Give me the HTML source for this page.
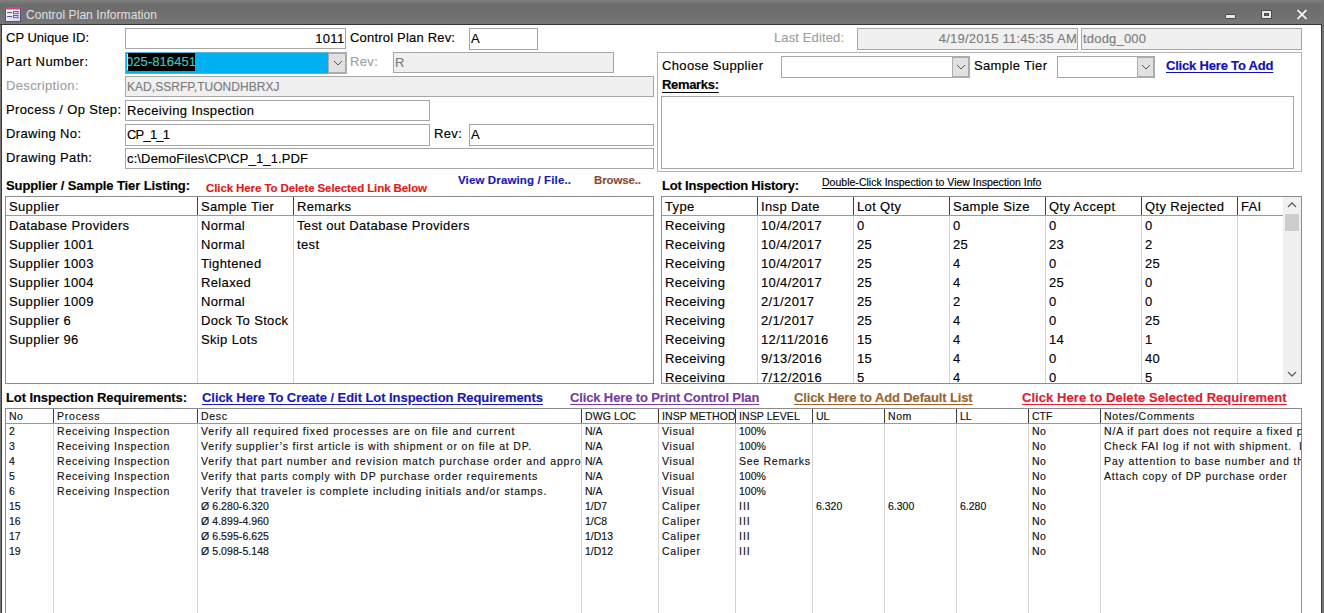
<!DOCTYPE html>
<html><head><meta charset="utf-8"><style>
html,body{margin:0;padding:0;width:1324px;height:613px;overflow:hidden;background:#fff;font-family:"Liberation Sans",sans-serif;}
body div{-webkit-text-stroke:0.15px currentColor;}
</style></head><body>
<div style="position:absolute;left:0px;top:0px;width:1324px;height:25px;background:linear-gradient(#808080 0px,#6c6c6c 5px,#6e6e6e 12px,#767676 22px)"></div><div style="position:absolute;left:0px;top:24px;width:1324px;height:1px;background:#363636"></div><div style="position:absolute;left:0px;top:25px;width:1px;height:588px;background:#747474"></div><div style="position:absolute;left:1px;top:24px;width:1px;height:589px;background:#3a3a3a"></div><div style="position:absolute;left:1321px;top:24px;width:1px;height:589px;background:#3a3a3a"></div><div style="position:absolute;left:1322px;top:0px;width:2px;height:613px;background:#727272"></div><svg style="position:absolute;left:5px;top:7px" width="16" height="15" viewBox="0 0 16 15">
<defs><linearGradient id="ig" x1="0" y1="0" x2="1" y2="1"><stop offset="0" stop-color="#ffffff"/><stop offset="1" stop-color="#d8d0f0"/></linearGradient></defs>
<rect x="0.5" y="0.5" width="15" height="14" fill="url(#ig)" stroke="#50507a"/>
<rect x="0" y="0" width="16" height="2.5" fill="#c84878"/>
<rect x="2" y="5" width="5" height="1.1" fill="#5a5a80"/>
<rect x="2" y="9" width="5" height="1.1" fill="#5a5a80"/>
<rect x="8.5" y="4.5" width="4.5" height="2.2" fill="none" stroke="#5a5a80" stroke-width="0.9"/>
<rect x="8.5" y="8.5" width="4.5" height="2.2" fill="none" stroke="#5a5a80" stroke-width="0.9"/>
</svg><div style="position:absolute;left:1225px;top:14px;width:11px;height:5px;background:#e8e8e8;border:1px solid #4a4a4a;box-sizing:border-box;border-radius:1px"></div><div style="position:absolute;left:1261px;top:10px;width:11px;height:9px;border:1px solid #4a4a4a;box-sizing:border-box"><div style="position:absolute;left:0;top:0;right:0;bottom:0;border:2px solid #e8e8e8;border-top-width:2px"><div style="position:absolute;left:0;top:0;right:0;bottom:0;border:1px solid #4a4a4a;border-width:0.5px"></div></div></div><svg style="position:absolute;left:1296px;top:9px" width="12" height="11" viewBox="0 0 12 11">
<path d="M1.5 1 L10.5 10 M10.5 1 L1.5 10" stroke="#4a4a4a" stroke-width="3.4"/>
<path d="M1.5 1 L10.5 10 M10.5 1 L1.5 10" stroke="#ececec" stroke-width="2.2"/></svg><div style="position:absolute;left:2px;top:25px;width:1319px;height:588px;background:#fff"></div><div style="position:absolute;left:125px;top:28px;width:221px;height:21px;background:#fff;border:1px solid #a6a6a6;box-sizing:border-box"></div><div style="position:absolute;left:469px;top:28px;width:69px;height:22px;background:#fff;border:1px solid #a6a6a6;box-sizing:border-box"></div><div style="position:absolute;left:125px;top:52px;width:221px;height:22px;background:#00b0f0;border:1px solid #5ab4d8;box-sizing:border-box"></div><div style="position:absolute;left:128px;top:53px;width:67px;height:18px;background:#000"></div><div style="position:absolute;left:127px;top:54px;width:1px;height:16px;background:#fff"></div><div style="position:absolute;left:328px;top:52px;width:19px;height:22px;background:#e1e1e1;border:2px solid #acacac;border-left-width:1px;box-sizing:border-box"></div><svg style="position:absolute;left:332.5px;top:59.7px" width="10" height="6" viewBox="0 0 10 6"><path d="M1 1 L5 5 L9 1" fill="none" stroke="#555" stroke-width="1"/></svg><div style="position:absolute;left:393px;top:52px;width:221px;height:21px;background:#f0f0f0;border:1px solid #a6a6a6;box-sizing:border-box"></div><div style="position:absolute;left:125px;top:76px;width:529px;height:21px;background:#f0f0f0;border:1px solid #a6a6a6;box-sizing:border-box"></div><div style="position:absolute;left:125px;top:100px;width:305px;height:21px;background:#fff;border:1px solid #a6a6a6;box-sizing:border-box"></div><div style="position:absolute;left:125px;top:124px;width:305px;height:22px;background:#fff;border:1px solid #a6a6a6;box-sizing:border-box"></div><div style="position:absolute;left:469px;top:124px;width:185px;height:22px;background:#fff;border:1px solid #a6a6a6;box-sizing:border-box"></div><div style="position:absolute;left:125px;top:148px;width:529px;height:21px;background:#fff;border:1px solid #a6a6a6;box-sizing:border-box"></div><div style="position:absolute;left:857px;top:28px;width:221px;height:22px;background:#f0f0f0;border:1px solid #a6a6a6;box-sizing:border-box"></div><div style="position:absolute;left:1081px;top:28px;width:221px;height:22px;background:#f0f0f0;border:1px solid #a6a6a6;box-sizing:border-box"></div><div style="position:absolute;left:657px;top:52px;width:645px;height:120px;background:#fff;border:1px solid #b4b4b4;box-sizing:border-box"></div><div style="position:absolute;left:781px;top:56px;width:188px;height:22px;background:#fff;border:1px solid #a6a6a6;box-sizing:border-box"></div><div style="position:absolute;left:952px;top:56px;width:18px;height:22px;background:#e1e1e1;border:2px solid #acacac;border-left-width:1px;box-sizing:border-box"></div><svg style="position:absolute;left:956.0px;top:63.7px" width="10" height="6" viewBox="0 0 10 6"><path d="M1 1 L5 5 L9 1" fill="none" stroke="#555" stroke-width="1"/></svg><div style="position:absolute;left:1057px;top:56px;width:97px;height:22px;background:#fff;border:1px solid #a6a6a6;box-sizing:border-box"></div><div style="position:absolute;left:1137px;top:56px;width:18px;height:22px;background:#e1e1e1;border:2px solid #acacac;border-left-width:1px;box-sizing:border-box"></div><svg style="position:absolute;left:1141.0px;top:63.7px" width="10" height="6" viewBox="0 0 10 6"><path d="M1 1 L5 5 L9 1" fill="none" stroke="#555" stroke-width="1"/></svg><div style="position:absolute;left:661px;top:96px;width:633px;height:73px;background:#fff;border:1px solid #a6a6a6;box-sizing:border-box"></div><div style="position:absolute;left:5px;top:196px;width:649px;height:188px;background:#fff;border:1px solid #8c8c8c;box-sizing:border-box"></div><div style="position:absolute;left:6px;top:215px;width:647px;height:1px;background:#999999"></div><div style="position:absolute;left:197px;top:197px;width:1px;height:18px;background:#404040"></div><div style="position:absolute;left:197px;top:216px;width:1px;height:167px;background:#d4d4d4"></div><div style="position:absolute;left:293px;top:197px;width:1px;height:18px;background:#404040"></div><div style="position:absolute;left:293px;top:216px;width:1px;height:167px;background:#d4d4d4"></div><div style="position:absolute;left:661px;top:196px;width:641px;height:188px;background:#fff;border:1px solid #8c8c8c;box-sizing:border-box"></div><div style="position:absolute;left:662px;top:215px;width:622px;height:1px;background:#999999"></div><div style="position:absolute;left:757px;top:197px;width:1px;height:18px;background:#404040"></div><div style="position:absolute;left:757px;top:216px;width:1px;height:167px;background:#d4d4d4"></div><div style="position:absolute;left:853px;top:197px;width:1px;height:18px;background:#404040"></div><div style="position:absolute;left:853px;top:216px;width:1px;height:167px;background:#d4d4d4"></div><div style="position:absolute;left:949px;top:197px;width:1px;height:18px;background:#404040"></div><div style="position:absolute;left:949px;top:216px;width:1px;height:167px;background:#d4d4d4"></div><div style="position:absolute;left:1045px;top:197px;width:1px;height:18px;background:#404040"></div><div style="position:absolute;left:1045px;top:216px;width:1px;height:167px;background:#d4d4d4"></div><div style="position:absolute;left:1141px;top:197px;width:1px;height:18px;background:#404040"></div><div style="position:absolute;left:1141px;top:216px;width:1px;height:167px;background:#d4d4d4"></div><div style="position:absolute;left:1237px;top:197px;width:1px;height:18px;background:#404040"></div><div style="position:absolute;left:1237px;top:216px;width:1px;height:167px;background:#d4d4d4"></div><div style="position:absolute;left:1283px;top:197px;width:18px;height:186px;background:#f0f0f0"></div><div style="position:absolute;left:1285px;top:214px;width:14px;height:17px;background:#cdcdcd"></div><svg style="position:absolute;left:1287px;top:202px" width="10" height="6" viewBox="0 0 10 6"><path d="M1 5 L5 1 L9 5" fill="none" stroke="#606060" stroke-width="1.3"/></svg><svg style="position:absolute;left:1287px;top:371px" width="10" height="6" viewBox="0 0 10 6"><path d="M1 1 L5 5 L9 1" fill="none" stroke="#606060" stroke-width="1.3"/></svg><div style="position:absolute;left:5px;top:408px;width:1297px;height:205px;border:1px solid #8c8c8c;border-bottom:none;box-sizing:border-box;background:#fff"></div><div style="position:absolute;left:6px;top:423px;width:1295px;height:1px;background:#999999"></div><div style="position:absolute;left:53px;top:409px;width:1px;height:14px;background:#404040"></div><div style="position:absolute;left:53px;top:424px;width:1px;height:189px;background:#d4d4d4"></div><div style="position:absolute;left:197px;top:409px;width:1px;height:14px;background:#404040"></div><div style="position:absolute;left:197px;top:424px;width:1px;height:189px;background:#d4d4d4"></div><div style="position:absolute;left:581px;top:409px;width:1px;height:14px;background:#404040"></div><div style="position:absolute;left:581px;top:424px;width:1px;height:189px;background:#d4d4d4"></div><div style="position:absolute;left:658px;top:409px;width:1px;height:14px;background:#404040"></div><div style="position:absolute;left:658px;top:424px;width:1px;height:189px;background:#d4d4d4"></div><div style="position:absolute;left:735px;top:409px;width:1px;height:14px;background:#404040"></div><div style="position:absolute;left:735px;top:424px;width:1px;height:189px;background:#d4d4d4"></div><div style="position:absolute;left:812px;top:409px;width:1px;height:14px;background:#404040"></div><div style="position:absolute;left:812px;top:424px;width:1px;height:189px;background:#d4d4d4"></div><div style="position:absolute;left:884px;top:409px;width:1px;height:14px;background:#404040"></div><div style="position:absolute;left:884px;top:424px;width:1px;height:189px;background:#d4d4d4"></div><div style="position:absolute;left:956px;top:409px;width:1px;height:14px;background:#404040"></div><div style="position:absolute;left:956px;top:424px;width:1px;height:189px;background:#d4d4d4"></div><div style="position:absolute;left:1028px;top:409px;width:1px;height:14px;background:#404040"></div><div style="position:absolute;left:1028px;top:424px;width:1px;height:189px;background:#d4d4d4"></div><div style="position:absolute;left:1100px;top:409px;width:1px;height:14px;background:#404040"></div><div style="position:absolute;left:1100px;top:424px;width:1px;height:189px;background:#d4d4d4"></div>
<div style="position:absolute;top:8px;font-size:12px;font-weight:400;color:#e0e0e0;white-space:pre;line-height:normal;letter-spacing:0.069px;left:26px;-webkit-text-stroke:0;">Control Plan Information</div><div style="position:absolute;top:30px;font-size:13px;font-weight:400;color:#000;white-space:pre;line-height:normal;letter-spacing:0.012px;left:6px;">CP Unique ID:</div><div style="position:absolute;top:30.5px;font-size:13px;font-weight:400;color:#000;white-space:pre;line-height:normal;letter-spacing:0.350px;right:979.5px;">1011</div><div style="position:absolute;top:30px;font-size:13px;font-weight:400;color:#000;white-space:pre;line-height:normal;letter-spacing:0.194px;left:350px;">Control Plan Rev:</div><div style="position:absolute;top:30.5px;font-size:13px;font-weight:400;color:#000;white-space:pre;line-height:normal;letter-spacing:0.350px;left:471px;">A</div><div style="position:absolute;top:54px;font-size:13px;font-weight:400;color:#000;white-space:pre;line-height:normal;letter-spacing:0.426px;left:6px;">Part Number:</div><div style="position:absolute;top:54px;font-size:13px;font-weight:400;color:#3cc8c0;white-space:pre;line-height:normal;letter-spacing:0.066px;left:126px;clip-path:inset(0 0 0 2px);">025-816451</div><div style="position:absolute;top:54px;font-size:13px;font-weight:400;color:#a0a0a0;white-space:pre;line-height:normal;letter-spacing:0.350px;left:350px;">Rev:</div><div style="position:absolute;top:55px;font-size:13px;font-weight:400;color:#7c7c7c;white-space:pre;line-height:normal;letter-spacing:0.350px;left:395px;">R</div><div style="position:absolute;top:78px;font-size:13px;font-weight:400;color:#a0a0a0;white-space:pre;line-height:normal;letter-spacing:0.350px;left:6px;">Description:</div><div style="position:absolute;top:80px;font-size:12px;font-weight:400;color:#7c7c7c;white-space:pre;line-height:normal;letter-spacing:0.036px;left:127px;">KAD,SSRFP,TUONDHBRXJ</div><div style="position:absolute;top:102px;font-size:13px;font-weight:400;color:#000;white-space:pre;line-height:normal;letter-spacing:0.350px;left:6px;">Process / Op Step:</div><div style="position:absolute;top:102.5px;font-size:13px;font-weight:400;color:#000;white-space:pre;line-height:normal;letter-spacing:0.370px;left:127px;">Receiving Inspection</div><div style="position:absolute;top:126px;font-size:13px;font-weight:400;color:#000;white-space:pre;line-height:normal;letter-spacing:0.350px;left:6px;">Drawing No:</div><div style="position:absolute;top:127px;font-size:13px;font-weight:400;color:#000;white-space:pre;line-height:normal;letter-spacing:-0.797px;left:127px;">CP_1_1</div><div style="position:absolute;top:126px;font-size:13px;font-weight:400;color:#000;white-space:pre;line-height:normal;letter-spacing:0.350px;left:434px;">Rev:</div><div style="position:absolute;top:127px;font-size:13px;font-weight:400;color:#000;white-space:pre;line-height:normal;letter-spacing:0.350px;left:471px;">A</div><div style="position:absolute;top:150px;font-size:13px;font-weight:400;color:#000;white-space:pre;line-height:normal;letter-spacing:0.350px;left:6px;">Drawing Path:</div><div style="position:absolute;top:150.5px;font-size:13px;font-weight:400;color:#000;white-space:pre;line-height:normal;letter-spacing:0.131px;left:127px;">c:\DemoFiles\CP\CP_1_1.PDF</div><div style="position:absolute;top:30px;font-size:13px;font-weight:400;color:#a0a0a0;white-space:pre;line-height:normal;letter-spacing:0.122px;left:774px;">Last Edited:</div><div style="position:absolute;top:31px;font-size:13px;font-weight:400;color:#7c7c7c;white-space:pre;line-height:normal;letter-spacing:0.226px;right:247px;">4/19/2015 11:45:35 AM</div><div style="position:absolute;top:31px;font-size:13px;font-weight:400;color:#7c7c7c;white-space:pre;line-height:normal;letter-spacing:0.193px;left:1083px;">tdodg_000</div><div style="position:absolute;top:58px;font-size:13px;font-weight:400;color:#000;white-space:pre;line-height:normal;letter-spacing:0.348px;left:662px;">Choose Supplier</div><div style="position:absolute;top:58px;font-size:13px;font-weight:400;color:#000;white-space:pre;line-height:normal;letter-spacing:0.362px;left:974px;">Sample Tier</div><div style="position:absolute;top:58px;font-size:13px;font-weight:700;color:#1010b8;white-space:pre;line-height:normal;letter-spacing:-0.189px;left:1166px;text-decoration:underline;text-underline-offset:2px;">Click Here To Add</div><div style="position:absolute;top:77px;font-size:13px;font-weight:700;color:#000;white-space:pre;line-height:normal;letter-spacing:-0.324px;left:662px;text-decoration:underline;text-underline-offset:3px;">Remarks:</div><div style="position:absolute;top:178px;font-size:13px;font-weight:700;color:#000;white-space:pre;line-height:normal;letter-spacing:-0.095px;left:6px;">Supplier / Sample Tier Listing:</div><div style="position:absolute;top:182px;font-size:11.5px;font-weight:700;color:#e01818;white-space:pre;line-height:normal;letter-spacing:-0.096px;left:206px;">Click Here To Delete Selected Link Below</div><div style="position:absolute;top:174px;font-size:11.5px;font-weight:700;color:#1a1ab4;white-space:pre;line-height:normal;letter-spacing:0.132px;left:458px;">View Drawing / File..</div><div style="position:absolute;top:174px;font-size:11.5px;font-weight:700;color:#8c4a3c;white-space:pre;line-height:normal;letter-spacing:-0.134px;left:594px;">Browse..</div><div style="position:absolute;top:178px;font-size:13px;font-weight:700;color:#000;white-space:pre;line-height:normal;letter-spacing:-0.207px;left:662px;">Lot Inspection History:</div><div style="position:absolute;top:176px;font-size:10.5px;font-weight:400;color:#000;white-space:pre;line-height:normal;letter-spacing:0.015px;left:822px;text-decoration:underline;text-underline-offset:2px;">Double-Click Inspection to View Inspection Info</div><div style="position:absolute;top:199px;font-size:13px;font-weight:400;color:#000;white-space:pre;line-height:normal;letter-spacing:0.350px;left:9px;">Supplier</div><div style="position:absolute;top:199px;font-size:13px;font-weight:400;color:#000;white-space:pre;line-height:normal;letter-spacing:0.350px;left:201px;">Sample Tier</div><div style="position:absolute;top:199px;font-size:13px;font-weight:400;color:#000;white-space:pre;line-height:normal;letter-spacing:0.350px;left:297px;">Remarks</div><div style="position:absolute;top:218px;font-size:13px;font-weight:400;color:#000;white-space:pre;line-height:normal;letter-spacing:0.350px;left:9px;">Database Providers</div><div style="position:absolute;top:218px;font-size:13px;font-weight:400;color:#000;white-space:pre;line-height:normal;letter-spacing:0.350px;left:201px;">Normal</div><div style="position:absolute;top:218px;font-size:13px;font-weight:400;color:#000;white-space:pre;line-height:normal;letter-spacing:0.350px;left:297px;">Test out Database Providers</div><div style="position:absolute;top:237px;font-size:13px;font-weight:400;color:#000;white-space:pre;line-height:normal;letter-spacing:0.350px;left:9px;">Supplier 1001</div><div style="position:absolute;top:237px;font-size:13px;font-weight:400;color:#000;white-space:pre;line-height:normal;letter-spacing:0.350px;left:201px;">Normal</div><div style="position:absolute;top:237px;font-size:13px;font-weight:400;color:#000;white-space:pre;line-height:normal;letter-spacing:0.350px;left:297px;">test</div><div style="position:absolute;top:256px;font-size:13px;font-weight:400;color:#000;white-space:pre;line-height:normal;letter-spacing:0.350px;left:9px;">Supplier 1003</div><div style="position:absolute;top:256px;font-size:13px;font-weight:400;color:#000;white-space:pre;line-height:normal;letter-spacing:0.350px;left:201px;">Tightened</div><div style="position:absolute;top:275px;font-size:13px;font-weight:400;color:#000;white-space:pre;line-height:normal;letter-spacing:0.350px;left:9px;">Supplier 1004</div><div style="position:absolute;top:275px;font-size:13px;font-weight:400;color:#000;white-space:pre;line-height:normal;letter-spacing:0.350px;left:201px;">Relaxed</div><div style="position:absolute;top:294px;font-size:13px;font-weight:400;color:#000;white-space:pre;line-height:normal;letter-spacing:0.350px;left:9px;">Supplier 1009</div><div style="position:absolute;top:294px;font-size:13px;font-weight:400;color:#000;white-space:pre;line-height:normal;letter-spacing:0.350px;left:201px;">Normal</div><div style="position:absolute;top:313px;font-size:13px;font-weight:400;color:#000;white-space:pre;line-height:normal;letter-spacing:0.350px;left:9px;">Supplier 6</div><div style="position:absolute;top:313px;font-size:13px;font-weight:400;color:#000;white-space:pre;line-height:normal;letter-spacing:0.350px;left:201px;">Dock To Stock</div><div style="position:absolute;top:332px;font-size:13px;font-weight:400;color:#000;white-space:pre;line-height:normal;letter-spacing:0.350px;left:9px;">Supplier 96</div><div style="position:absolute;top:332px;font-size:13px;font-weight:400;color:#000;white-space:pre;line-height:normal;letter-spacing:0.350px;left:201px;">Skip Lots</div><div style="position:absolute;top:199px;font-size:13px;font-weight:400;color:#000;white-space:pre;line-height:normal;letter-spacing:0.350px;left:665px;">Type</div><div style="position:absolute;top:199px;font-size:13px;font-weight:400;color:#000;white-space:pre;line-height:normal;letter-spacing:0.350px;left:761px;">Insp Date</div><div style="position:absolute;top:199px;font-size:13px;font-weight:400;color:#000;white-space:pre;line-height:normal;letter-spacing:0.350px;left:857px;">Lot Qty</div><div style="position:absolute;top:199px;font-size:13px;font-weight:400;color:#000;white-space:pre;line-height:normal;letter-spacing:0.350px;left:953px;">Sample Size</div><div style="position:absolute;top:199px;font-size:13px;font-weight:400;color:#000;white-space:pre;line-height:normal;letter-spacing:0.350px;left:1049px;">Qty Accept</div><div style="position:absolute;top:199px;font-size:13px;font-weight:400;color:#000;white-space:pre;line-height:normal;letter-spacing:0.350px;left:1145px;">Qty Rejected</div><div style="position:absolute;top:199px;font-size:13px;font-weight:400;color:#000;white-space:pre;line-height:normal;letter-spacing:0.350px;left:1241px;">FAI</div><div style="position:absolute;top:218px;font-size:13px;font-weight:400;color:#000;white-space:pre;line-height:normal;letter-spacing:0.350px;left:665px;">Receiving</div><div style="position:absolute;top:218px;font-size:13px;font-weight:400;color:#000;white-space:pre;line-height:normal;letter-spacing:0.350px;left:761px;">10/4/2017</div><div style="position:absolute;top:218px;font-size:13px;font-weight:400;color:#000;white-space:pre;line-height:normal;letter-spacing:0.350px;left:857px;">0</div><div style="position:absolute;top:218px;font-size:13px;font-weight:400;color:#000;white-space:pre;line-height:normal;letter-spacing:0.350px;left:953px;">0</div><div style="position:absolute;top:218px;font-size:13px;font-weight:400;color:#000;white-space:pre;line-height:normal;letter-spacing:0.350px;left:1049px;">0</div><div style="position:absolute;top:218px;font-size:13px;font-weight:400;color:#000;white-space:pre;line-height:normal;letter-spacing:0.350px;left:1145px;">0</div><div style="position:absolute;top:237px;font-size:13px;font-weight:400;color:#000;white-space:pre;line-height:normal;letter-spacing:0.350px;left:665px;">Receiving</div><div style="position:absolute;top:237px;font-size:13px;font-weight:400;color:#000;white-space:pre;line-height:normal;letter-spacing:0.350px;left:761px;">10/4/2017</div><div style="position:absolute;top:237px;font-size:13px;font-weight:400;color:#000;white-space:pre;line-height:normal;letter-spacing:0.350px;left:857px;">25</div><div style="position:absolute;top:237px;font-size:13px;font-weight:400;color:#000;white-space:pre;line-height:normal;letter-spacing:0.350px;left:953px;">25</div><div style="position:absolute;top:237px;font-size:13px;font-weight:400;color:#000;white-space:pre;line-height:normal;letter-spacing:0.350px;left:1049px;">23</div><div style="position:absolute;top:237px;font-size:13px;font-weight:400;color:#000;white-space:pre;line-height:normal;letter-spacing:0.350px;left:1145px;">2</div><div style="position:absolute;top:256px;font-size:13px;font-weight:400;color:#000;white-space:pre;line-height:normal;letter-spacing:0.350px;left:665px;">Receiving</div><div style="position:absolute;top:256px;font-size:13px;font-weight:400;color:#000;white-space:pre;line-height:normal;letter-spacing:0.350px;left:761px;">10/4/2017</div><div style="position:absolute;top:256px;font-size:13px;font-weight:400;color:#000;white-space:pre;line-height:normal;letter-spacing:0.350px;left:857px;">25</div><div style="position:absolute;top:256px;font-size:13px;font-weight:400;color:#000;white-space:pre;line-height:normal;letter-spacing:0.350px;left:953px;">4</div><div style="position:absolute;top:256px;font-size:13px;font-weight:400;color:#000;white-space:pre;line-height:normal;letter-spacing:0.350px;left:1049px;">0</div><div style="position:absolute;top:256px;font-size:13px;font-weight:400;color:#000;white-space:pre;line-height:normal;letter-spacing:0.350px;left:1145px;">25</div><div style="position:absolute;top:275px;font-size:13px;font-weight:400;color:#000;white-space:pre;line-height:normal;letter-spacing:0.350px;left:665px;">Receiving</div><div style="position:absolute;top:275px;font-size:13px;font-weight:400;color:#000;white-space:pre;line-height:normal;letter-spacing:0.350px;left:761px;">10/4/2017</div><div style="position:absolute;top:275px;font-size:13px;font-weight:400;color:#000;white-space:pre;line-height:normal;letter-spacing:0.350px;left:857px;">25</div><div style="position:absolute;top:275px;font-size:13px;font-weight:400;color:#000;white-space:pre;line-height:normal;letter-spacing:0.350px;left:953px;">4</div><div style="position:absolute;top:275px;font-size:13px;font-weight:400;color:#000;white-space:pre;line-height:normal;letter-spacing:0.350px;left:1049px;">25</div><div style="position:absolute;top:275px;font-size:13px;font-weight:400;color:#000;white-space:pre;line-height:normal;letter-spacing:0.350px;left:1145px;">0</div><div style="position:absolute;top:294px;font-size:13px;font-weight:400;color:#000;white-space:pre;line-height:normal;letter-spacing:0.350px;left:665px;">Receiving</div><div style="position:absolute;top:294px;font-size:13px;font-weight:400;color:#000;white-space:pre;line-height:normal;letter-spacing:0.350px;left:761px;">2/1/2017</div><div style="position:absolute;top:294px;font-size:13px;font-weight:400;color:#000;white-space:pre;line-height:normal;letter-spacing:0.350px;left:857px;">25</div><div style="position:absolute;top:294px;font-size:13px;font-weight:400;color:#000;white-space:pre;line-height:normal;letter-spacing:0.350px;left:953px;">2</div><div style="position:absolute;top:294px;font-size:13px;font-weight:400;color:#000;white-space:pre;line-height:normal;letter-spacing:0.350px;left:1049px;">0</div><div style="position:absolute;top:294px;font-size:13px;font-weight:400;color:#000;white-space:pre;line-height:normal;letter-spacing:0.350px;left:1145px;">0</div><div style="position:absolute;top:313px;font-size:13px;font-weight:400;color:#000;white-space:pre;line-height:normal;letter-spacing:0.350px;left:665px;">Receiving</div><div style="position:absolute;top:313px;font-size:13px;font-weight:400;color:#000;white-space:pre;line-height:normal;letter-spacing:0.350px;left:761px;">2/1/2017</div><div style="position:absolute;top:313px;font-size:13px;font-weight:400;color:#000;white-space:pre;line-height:normal;letter-spacing:0.350px;left:857px;">25</div><div style="position:absolute;top:313px;font-size:13px;font-weight:400;color:#000;white-space:pre;line-height:normal;letter-spacing:0.350px;left:953px;">4</div><div style="position:absolute;top:313px;font-size:13px;font-weight:400;color:#000;white-space:pre;line-height:normal;letter-spacing:0.350px;left:1049px;">0</div><div style="position:absolute;top:313px;font-size:13px;font-weight:400;color:#000;white-space:pre;line-height:normal;letter-spacing:0.350px;left:1145px;">25</div><div style="position:absolute;top:332px;font-size:13px;font-weight:400;color:#000;white-space:pre;line-height:normal;letter-spacing:0.350px;left:665px;">Receiving</div><div style="position:absolute;top:332px;font-size:13px;font-weight:400;color:#000;white-space:pre;line-height:normal;letter-spacing:0.350px;left:761px;">12/11/2016</div><div style="position:absolute;top:332px;font-size:13px;font-weight:400;color:#000;white-space:pre;line-height:normal;letter-spacing:0.350px;left:857px;">15</div><div style="position:absolute;top:332px;font-size:13px;font-weight:400;color:#000;white-space:pre;line-height:normal;letter-spacing:0.350px;left:953px;">4</div><div style="position:absolute;top:332px;font-size:13px;font-weight:400;color:#000;white-space:pre;line-height:normal;letter-spacing:0.350px;left:1049px;">14</div><div style="position:absolute;top:332px;font-size:13px;font-weight:400;color:#000;white-space:pre;line-height:normal;letter-spacing:0.350px;left:1145px;">1</div><div style="position:absolute;top:351px;font-size:13px;font-weight:400;color:#000;white-space:pre;line-height:normal;letter-spacing:0.350px;left:665px;">Receiving</div><div style="position:absolute;top:351px;font-size:13px;font-weight:400;color:#000;white-space:pre;line-height:normal;letter-spacing:0.350px;left:761px;">9/13/2016</div><div style="position:absolute;top:351px;font-size:13px;font-weight:400;color:#000;white-space:pre;line-height:normal;letter-spacing:0.350px;left:857px;">15</div><div style="position:absolute;top:351px;font-size:13px;font-weight:400;color:#000;white-space:pre;line-height:normal;letter-spacing:0.350px;left:953px;">4</div><div style="position:absolute;top:351px;font-size:13px;font-weight:400;color:#000;white-space:pre;line-height:normal;letter-spacing:0.350px;left:1049px;">0</div><div style="position:absolute;top:351px;font-size:13px;font-weight:400;color:#000;white-space:pre;line-height:normal;letter-spacing:0.350px;left:1145px;">40</div><div style="position:absolute;top:370px;font-size:13px;font-weight:400;color:#000;white-space:pre;line-height:normal;letter-spacing:0.350px;left:665px;clip-path:inset(0 0 3px 0);">Receiving</div><div style="position:absolute;top:370px;font-size:13px;font-weight:400;color:#000;white-space:pre;line-height:normal;letter-spacing:0.350px;left:761px;clip-path:inset(0 0 3px 0);">7/12/2016</div><div style="position:absolute;top:370px;font-size:13px;font-weight:400;color:#000;white-space:pre;line-height:normal;letter-spacing:0.350px;left:857px;clip-path:inset(0 0 3px 0);">5</div><div style="position:absolute;top:370px;font-size:13px;font-weight:400;color:#000;white-space:pre;line-height:normal;letter-spacing:0.350px;left:953px;clip-path:inset(0 0 3px 0);">4</div><div style="position:absolute;top:370px;font-size:13px;font-weight:400;color:#000;white-space:pre;line-height:normal;letter-spacing:0.350px;left:1049px;clip-path:inset(0 0 3px 0);">0</div><div style="position:absolute;top:370px;font-size:13px;font-weight:400;color:#000;white-space:pre;line-height:normal;letter-spacing:0.350px;left:1145px;clip-path:inset(0 0 3px 0);">5</div><div style="position:absolute;top:390px;font-size:13px;font-weight:700;color:#000;white-space:pre;line-height:normal;letter-spacing:-0.091px;left:6px;">Lot Inspection Requirements:</div><div style="position:absolute;top:390px;font-size:13px;font-weight:700;color:#1a1ab4;white-space:pre;line-height:normal;letter-spacing:-0.062px;left:202px;text-decoration:underline;text-underline-offset:2px;">Click Here To Create / Edit Lot Inspection Requirements</div><div style="position:absolute;top:390px;font-size:13px;font-weight:700;color:#7a3c9c;white-space:pre;line-height:normal;letter-spacing:-0.135px;left:570px;text-decoration:underline;text-underline-offset:2px;">Click Here to Print Control Plan</div><div style="position:absolute;top:390px;font-size:13px;font-weight:700;color:#9a6630;white-space:pre;line-height:normal;letter-spacing:-0.123px;left:794px;text-decoration:underline;text-underline-offset:2px;">Click Here to Add Default List</div><div style="position:absolute;top:390px;font-size:13px;font-weight:700;color:#e02030;white-space:pre;line-height:normal;letter-spacing:0.061px;left:1022px;text-decoration:underline;text-underline-offset:2px;">Click Here to Delete Selected Requirement</div><div style="position:absolute;top:410px;font-size:10.5px;font-weight:400;color:#111;white-space:pre;line-height:normal;letter-spacing:0.450px;width:44px;overflow:hidden;left:9px;">No</div><div style="position:absolute;top:410px;font-size:10.5px;font-weight:400;color:#111;white-space:pre;line-height:normal;letter-spacing:0.771px;width:140px;overflow:hidden;left:57px;">Process</div><div style="position:absolute;top:410px;font-size:10.5px;font-weight:400;color:#111;white-space:pre;line-height:normal;letter-spacing:0.675px;width:380px;overflow:hidden;left:201px;">Desc</div><div style="position:absolute;top:410px;font-size:10.5px;font-weight:400;color:#111;white-space:pre;line-height:normal;letter-spacing:0.129px;width:73px;overflow:hidden;left:585px;">DWG LOC</div><div style="position:absolute;top:410px;font-size:10.5px;font-weight:400;color:#111;white-space:pre;line-height:normal;letter-spacing:0.082px;width:73px;overflow:hidden;left:662px;">INSP METHOD</div><div style="position:absolute;top:410px;font-size:10.5px;font-weight:400;color:#111;white-space:pre;line-height:normal;letter-spacing:0.090px;width:73px;overflow:hidden;left:739px;">INSP LEVEL</div><div style="position:absolute;top:410px;font-size:10.5px;font-weight:400;color:#111;white-space:pre;line-height:normal;width:68px;overflow:hidden;left:816px;">UL</div><div style="position:absolute;top:410px;font-size:10.5px;font-weight:400;color:#111;white-space:pre;line-height:normal;letter-spacing:0.600px;width:68px;overflow:hidden;left:888px;">Nom</div><div style="position:absolute;top:410px;font-size:10.5px;font-weight:400;color:#111;white-space:pre;line-height:normal;width:68px;overflow:hidden;left:960px;">LL</div><div style="position:absolute;top:410px;font-size:10.5px;font-weight:400;color:#111;white-space:pre;line-height:normal;width:68px;overflow:hidden;left:1032px;">CTF</div><div style="position:absolute;top:410px;font-size:10.5px;font-weight:400;color:#111;white-space:pre;line-height:normal;letter-spacing:0.707px;width:197px;overflow:hidden;left:1104px;">Notes/Comments</div><div style="position:absolute;top:425px;font-size:10.5px;font-weight:400;color:#111;white-space:pre;line-height:normal;width:44px;overflow:hidden;left:9px;">2</div><div style="position:absolute;top:425px;font-size:10.5px;font-weight:400;color:#111;white-space:pre;line-height:normal;letter-spacing:0.810px;width:140px;overflow:hidden;left:57px;">Receiving Inspection</div><div style="position:absolute;top:425px;font-size:10.5px;font-weight:400;color:#111;white-space:pre;line-height:normal;letter-spacing:0.885px;width:380px;overflow:hidden;left:201px;">Verify all required fixed processes are on file and current</div><div style="position:absolute;top:425px;font-size:10.5px;font-weight:400;color:#111;white-space:pre;line-height:normal;width:73px;overflow:hidden;left:585px;">N/A</div><div style="position:absolute;top:425px;font-size:10.5px;font-weight:400;color:#111;white-space:pre;line-height:normal;letter-spacing:0.750px;width:73px;overflow:hidden;left:662px;">Visual</div><div style="position:absolute;top:425px;font-size:10.5px;font-weight:400;color:#111;white-space:pre;line-height:normal;width:73px;overflow:hidden;left:739px;">100%</div><div style="position:absolute;top:425px;font-size:10.5px;font-weight:400;color:#111;white-space:pre;line-height:normal;letter-spacing:0.450px;width:68px;overflow:hidden;left:1032px;">No</div><div style="position:absolute;top:425px;font-size:10.5px;font-weight:400;color:#111;white-space:pre;line-height:normal;letter-spacing:0.839px;width:197px;overflow:hidden;left:1104px;">N/A if part does not require a fixed process</div><div style="position:absolute;top:440px;font-size:10.5px;font-weight:400;color:#111;white-space:pre;line-height:normal;width:44px;overflow:hidden;left:9px;">3</div><div style="position:absolute;top:440px;font-size:10.5px;font-weight:400;color:#111;white-space:pre;line-height:normal;letter-spacing:0.810px;width:140px;overflow:hidden;left:57px;">Receiving Inspection</div><div style="position:absolute;top:440px;font-size:10.5px;font-weight:400;color:#111;white-space:pre;line-height:normal;letter-spacing:0.832px;width:380px;overflow:hidden;left:201px;">Verify supplier’s first article is with shipment or on file at DP.</div><div style="position:absolute;top:440px;font-size:10.5px;font-weight:400;color:#111;white-space:pre;line-height:normal;width:73px;overflow:hidden;left:585px;">N/A</div><div style="position:absolute;top:440px;font-size:10.5px;font-weight:400;color:#111;white-space:pre;line-height:normal;letter-spacing:0.750px;width:73px;overflow:hidden;left:662px;">Visual</div><div style="position:absolute;top:440px;font-size:10.5px;font-weight:400;color:#111;white-space:pre;line-height:normal;width:73px;overflow:hidden;left:739px;">100%</div><div style="position:absolute;top:440px;font-size:10.5px;font-weight:400;color:#111;white-space:pre;line-height:normal;letter-spacing:0.450px;width:68px;overflow:hidden;left:1032px;">No</div><div style="position:absolute;top:440px;font-size:10.5px;font-weight:400;color:#111;white-space:pre;line-height:normal;letter-spacing:0.762px;width:197px;overflow:hidden;left:1104px;">Check FAI log if not with shipment.  If</div><div style="position:absolute;top:455px;font-size:10.5px;font-weight:400;color:#111;white-space:pre;line-height:normal;width:44px;overflow:hidden;left:9px;">4</div><div style="position:absolute;top:455px;font-size:10.5px;font-weight:400;color:#111;white-space:pre;line-height:normal;letter-spacing:0.810px;width:140px;overflow:hidden;left:57px;">Receiving Inspection</div><div style="position:absolute;top:455px;font-size:10.5px;font-weight:400;color:#111;white-space:pre;line-height:normal;letter-spacing:0.887px;width:380px;overflow:hidden;left:201px;">Verify that part number and revision match purchase order and approval</div><div style="position:absolute;top:455px;font-size:10.5px;font-weight:400;color:#111;white-space:pre;line-height:normal;width:73px;overflow:hidden;left:585px;">N/A</div><div style="position:absolute;top:455px;font-size:10.5px;font-weight:400;color:#111;white-space:pre;line-height:normal;letter-spacing:0.750px;width:73px;overflow:hidden;left:662px;">Visual</div><div style="position:absolute;top:455px;font-size:10.5px;font-weight:400;color:#111;white-space:pre;line-height:normal;letter-spacing:0.736px;width:73px;overflow:hidden;left:739px;">See Remarks</div><div style="position:absolute;top:455px;font-size:10.5px;font-weight:400;color:#111;white-space:pre;line-height:normal;letter-spacing:0.450px;width:68px;overflow:hidden;left:1032px;">No</div><div style="position:absolute;top:455px;font-size:10.5px;font-weight:400;color:#111;white-space:pre;line-height:normal;letter-spacing:0.875px;width:197px;overflow:hidden;left:1104px;">Pay attention to base number and the</div><div style="position:absolute;top:470px;font-size:10.5px;font-weight:400;color:#111;white-space:pre;line-height:normal;width:44px;overflow:hidden;left:9px;">5</div><div style="position:absolute;top:470px;font-size:10.5px;font-weight:400;color:#111;white-space:pre;line-height:normal;letter-spacing:0.810px;width:140px;overflow:hidden;left:57px;">Receiving Inspection</div><div style="position:absolute;top:470px;font-size:10.5px;font-weight:400;color:#111;white-space:pre;line-height:normal;letter-spacing:0.855px;width:380px;overflow:hidden;left:201px;">Verify that parts comply with DP purchase order requirements</div><div style="position:absolute;top:470px;font-size:10.5px;font-weight:400;color:#111;white-space:pre;line-height:normal;width:73px;overflow:hidden;left:585px;">N/A</div><div style="position:absolute;top:470px;font-size:10.5px;font-weight:400;color:#111;white-space:pre;line-height:normal;letter-spacing:0.750px;width:73px;overflow:hidden;left:662px;">Visual</div><div style="position:absolute;top:470px;font-size:10.5px;font-weight:400;color:#111;white-space:pre;line-height:normal;width:73px;overflow:hidden;left:739px;">100%</div><div style="position:absolute;top:470px;font-size:10.5px;font-weight:400;color:#111;white-space:pre;line-height:normal;letter-spacing:0.450px;width:68px;overflow:hidden;left:1032px;">No</div><div style="position:absolute;top:470px;font-size:10.5px;font-weight:400;color:#111;white-space:pre;line-height:normal;letter-spacing:0.816px;width:197px;overflow:hidden;left:1104px;">Attach copy of DP purchase order</div><div style="position:absolute;top:485px;font-size:10.5px;font-weight:400;color:#111;white-space:pre;line-height:normal;width:44px;overflow:hidden;left:9px;">6</div><div style="position:absolute;top:485px;font-size:10.5px;font-weight:400;color:#111;white-space:pre;line-height:normal;letter-spacing:0.810px;width:140px;overflow:hidden;left:57px;">Receiving Inspection</div><div style="position:absolute;top:485px;font-size:10.5px;font-weight:400;color:#111;white-space:pre;line-height:normal;letter-spacing:0.859px;width:380px;overflow:hidden;left:201px;">Verify that traveler is complete including initials and/or stamps.</div><div style="position:absolute;top:485px;font-size:10.5px;font-weight:400;color:#111;white-space:pre;line-height:normal;width:73px;overflow:hidden;left:585px;">N/A</div><div style="position:absolute;top:485px;font-size:10.5px;font-weight:400;color:#111;white-space:pre;line-height:normal;letter-spacing:0.750px;width:73px;overflow:hidden;left:662px;">Visual</div><div style="position:absolute;top:485px;font-size:10.5px;font-weight:400;color:#111;white-space:pre;line-height:normal;width:73px;overflow:hidden;left:739px;">100%</div><div style="position:absolute;top:485px;font-size:10.5px;font-weight:400;color:#111;white-space:pre;line-height:normal;letter-spacing:0.450px;width:68px;overflow:hidden;left:1032px;">No</div><div style="position:absolute;top:500px;font-size:10.5px;font-weight:400;color:#111;white-space:pre;line-height:normal;width:44px;overflow:hidden;left:9px;">15</div><div style="position:absolute;top:500px;font-size:10.5px;font-weight:400;color:#111;white-space:pre;line-height:normal;letter-spacing:0.069px;width:380px;overflow:hidden;left:201px;">Ø 6.280-6.320</div><div style="position:absolute;top:500px;font-size:10.5px;font-weight:400;color:#111;white-space:pre;line-height:normal;width:73px;overflow:hidden;left:585px;">1/D7</div><div style="position:absolute;top:500px;font-size:10.5px;font-weight:400;color:#111;white-space:pre;line-height:normal;letter-spacing:0.771px;width:73px;overflow:hidden;left:662px;">Caliper</div><div style="position:absolute;top:500px;font-size:10.5px;font-weight:400;color:#111;white-space:pre;line-height:normal;letter-spacing:1.000px;width:73px;overflow:hidden;left:739px;">III</div><div style="position:absolute;top:500px;font-size:10.5px;font-weight:400;color:#111;white-space:pre;line-height:normal;width:68px;overflow:hidden;left:816px;">6.320</div><div style="position:absolute;top:500px;font-size:10.5px;font-weight:400;color:#111;white-space:pre;line-height:normal;width:68px;overflow:hidden;left:888px;">6.300</div><div style="position:absolute;top:500px;font-size:10.5px;font-weight:400;color:#111;white-space:pre;line-height:normal;width:68px;overflow:hidden;left:960px;">6.280</div><div style="position:absolute;top:500px;font-size:10.5px;font-weight:400;color:#111;white-space:pre;line-height:normal;letter-spacing:0.450px;width:68px;overflow:hidden;left:1032px;">No</div><div style="position:absolute;top:515px;font-size:10.5px;font-weight:400;color:#111;white-space:pre;line-height:normal;width:44px;overflow:hidden;left:9px;">16</div><div style="position:absolute;top:515px;font-size:10.5px;font-weight:400;color:#111;white-space:pre;line-height:normal;letter-spacing:0.069px;width:380px;overflow:hidden;left:201px;">Ø 4.899-4.960</div><div style="position:absolute;top:515px;font-size:10.5px;font-weight:400;color:#111;white-space:pre;line-height:normal;width:73px;overflow:hidden;left:585px;">1/C8</div><div style="position:absolute;top:515px;font-size:10.5px;font-weight:400;color:#111;white-space:pre;line-height:normal;letter-spacing:0.771px;width:73px;overflow:hidden;left:662px;">Caliper</div><div style="position:absolute;top:515px;font-size:10.5px;font-weight:400;color:#111;white-space:pre;line-height:normal;letter-spacing:1.000px;width:73px;overflow:hidden;left:739px;">III</div><div style="position:absolute;top:515px;font-size:10.5px;font-weight:400;color:#111;white-space:pre;line-height:normal;letter-spacing:0.450px;width:68px;overflow:hidden;left:1032px;">No</div><div style="position:absolute;top:530px;font-size:10.5px;font-weight:400;color:#111;white-space:pre;line-height:normal;width:44px;overflow:hidden;left:9px;">17</div><div style="position:absolute;top:530px;font-size:10.5px;font-weight:400;color:#111;white-space:pre;line-height:normal;letter-spacing:0.069px;width:380px;overflow:hidden;left:201px;">Ø 6.595-6.625</div><div style="position:absolute;top:530px;font-size:10.5px;font-weight:400;color:#111;white-space:pre;line-height:normal;width:73px;overflow:hidden;left:585px;">1/D13</div><div style="position:absolute;top:530px;font-size:10.5px;font-weight:400;color:#111;white-space:pre;line-height:normal;letter-spacing:0.771px;width:73px;overflow:hidden;left:662px;">Caliper</div><div style="position:absolute;top:530px;font-size:10.5px;font-weight:400;color:#111;white-space:pre;line-height:normal;letter-spacing:1.000px;width:73px;overflow:hidden;left:739px;">III</div><div style="position:absolute;top:530px;font-size:10.5px;font-weight:400;color:#111;white-space:pre;line-height:normal;letter-spacing:0.450px;width:68px;overflow:hidden;left:1032px;">No</div><div style="position:absolute;top:545px;font-size:10.5px;font-weight:400;color:#111;white-space:pre;line-height:normal;width:44px;overflow:hidden;left:9px;">19</div><div style="position:absolute;top:545px;font-size:10.5px;font-weight:400;color:#111;white-space:pre;line-height:normal;letter-spacing:0.069px;width:380px;overflow:hidden;left:201px;">Ø 5.098-5.148</div><div style="position:absolute;top:545px;font-size:10.5px;font-weight:400;color:#111;white-space:pre;line-height:normal;width:73px;overflow:hidden;left:585px;">1/D12</div><div style="position:absolute;top:545px;font-size:10.5px;font-weight:400;color:#111;white-space:pre;line-height:normal;letter-spacing:0.771px;width:73px;overflow:hidden;left:662px;">Caliper</div><div style="position:absolute;top:545px;font-size:10.5px;font-weight:400;color:#111;white-space:pre;line-height:normal;letter-spacing:1.000px;width:73px;overflow:hidden;left:739px;">III</div><div style="position:absolute;top:545px;font-size:10.5px;font-weight:400;color:#111;white-space:pre;line-height:normal;letter-spacing:0.450px;width:68px;overflow:hidden;left:1032px;">No</div>
</body></html>
